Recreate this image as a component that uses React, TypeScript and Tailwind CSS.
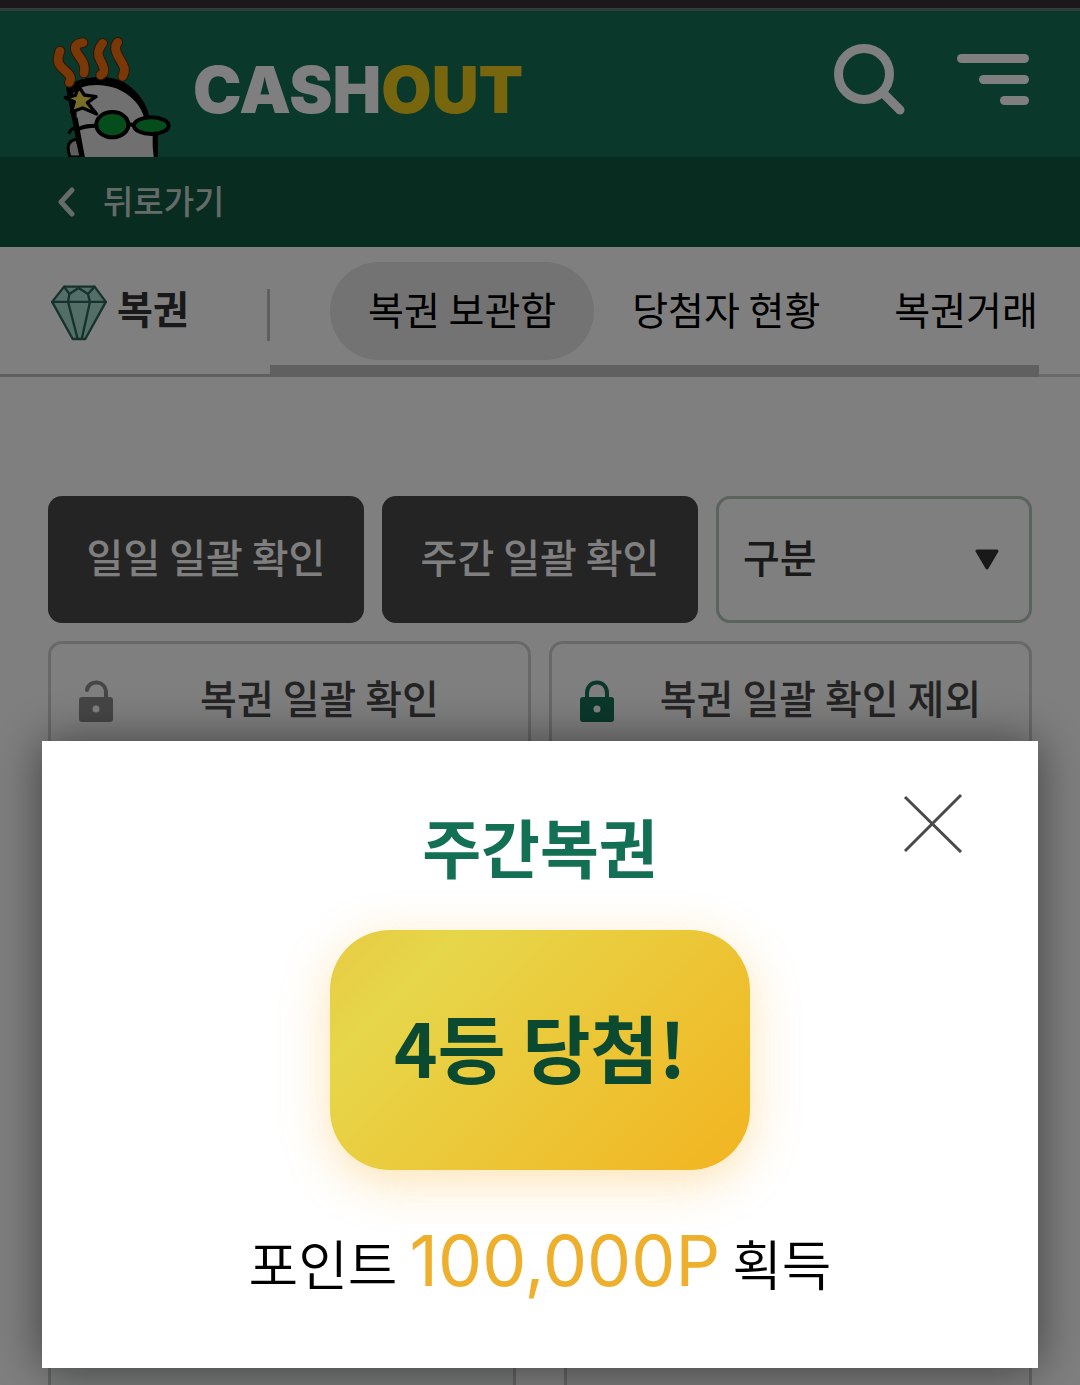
import React from "react";

const flames = [
  "M90 156C78 190 86 198 104 214C122 230 126 236 118 250",
  "M159 131C136 134 130 144 141 162C154 184 168 192 162 222",
  "M218 133C204 150 200 164 211 184C224 206 226 222 212 228",
  "M263 130C252 142 256 158 268 178C284 204 288 212 278 232",
];

function Mascot() {
  return (
    <svg viewBox="60 108 366 366" className="h-[122px] w-[122px] shrink-0" aria-hidden="true">
      <path d="M120 474C108 440 116 425 140 420L158 474Z" fill="#bcbcbc" stroke="#000" strokeWidth="9" />
      <path d="M116 404C120 394 126 388 136 386" fill="none" stroke="#000" strokeWidth="9" />
      <path
        d="M150 484L108 266C146 232 216 226 270 244C320 268 348 310 358 352L384 400L384 484Z"
        fill="#000"
      />
      <path
        d="M158 484L126 288C150 252 214 252 258 268C306 288 334 322 343 358L368 408V440L372 484Z"
        fill="#e0e0e0"
      />
      <path d="M112 270L138 290L140 356L124 352Z" fill="#000" />
      <path d="M136 356L160 484" stroke="#000" strokeWidth="13" />
      <g fill="none" strokeLinecap="round" strokeLinejoin="round">
        {flames.map((d) => (
          <g key={d}>
            <path d={d} stroke="#5c2c0c" strokeWidth="32" />
            <path d={d} stroke="#f2700f" strokeWidth="26" />
          </g>
        ))}
      </g>
      <path d="M142 392C160 380 180 380 200 380M292 376L312 378" fill="none" stroke="#000" strokeWidth="12" />
      <ellipse cx="247" cy="377" rx="48" ry="38" fill="#0b9c38" stroke="#000" strokeWidth="12" />
      <ellipse cx="364" cy="380" rx="52" ry="25" fill="#0b9c38" stroke="#000" strokeWidth="12" />
      <path
        d="M146 262L163 288L198 293L172 311L200 345L158 327L124 339L133 308L106 296L136 289Z"
        fill="#f2dc4a"
        stroke="#000"
        strokeWidth="10"
        strokeLinejoin="round"
      />
    </svg>
  );
}

function Gem() {
  return (
    <svg viewBox="150 400 174 172" className="mt-1 h-[57px] w-[58px] shrink-0" aria-hidden="true">
      <g stroke="#2c6458" strokeWidth="7" strokeLinejoin="round" strokeLinecap="round">
        <path d="M192 408H284L318 454L256 566H218L156 454Z" fill="#a4dccc" />
        <path
          d="M156 454H318M192 408L208 430L236 412L264 430L284 408M208 430L204 454L232 562M264 430L270 454L246 562"
          fill="none"
        />
      </g>
    </svg>
  );
}

function Lock({ open = false }: { open?: boolean }) {
  return (
    <svg
      viewBox="0 0 34 42"
      className={open ? "h-[42px] w-[34px] shrink-0 text-[#8c8c8c]" : "h-[42px] w-[34px] shrink-0 text-[#147054]"}
      aria-hidden="true"
    >
      <path
        d={open ? "M8 10C10 -1 27 0 27 13V18" : "M7 18V13C7 -1 27 -1 27 13V18"}
        fill="none"
        stroke="currentColor"
        strokeWidth="4"
        strokeLinecap="round"
      />
      <rect y="17" width="34" height="25" rx="3" fill="currentColor" />
      <circle cx="17" cy="29" r="3.5" fill="#fff" />
    </svg>
  );
}

const tabs = ["복권 보관함", "당첨자 현황", "복권거래"];

export default function App() {
  return (
    <div className="flex min-h-screen flex-col overflow-hidden bg-white font-['Noto_Sans_CJK_KR',sans-serif] text-[40px] leading-[56px] text-[#333]">
      <div className="h-2 bg-[#343036]" />
      <header className="flex h-[149px] items-end border-t-[3px] border-[#5c7a78] bg-[#147054] pr-[51px] pl-[50px]">
        <Mascot />
        <a
          href="#home"
          className="ml-[21px] self-center pt-3 font-['Inter',sans-serif] text-[65px] leading-[64px] font-black text-white"
        >
          CASH<span className="text-[#f0cd1c]">OUT</span>
        </a>
        <div className="mb-[41px] ml-auto flex items-start gap-[52px]">
          <button type="button" aria-label="검색">
            <svg viewBox="0 0 72 72" className="h-[72px] w-[72px]" fill="none" stroke="#fff" strokeWidth="9" aria-hidden="true">
              <circle cx="31" cy="30" r="25.5" />
              <path d="M50 49L67 66" strokeLinecap="round" />
            </svg>
          </button>
          <button type="button" aria-label="메뉴" className="flex w-[72px] flex-col items-end gap-3 pt-[10px]">
            <span className="h-[9px] w-[72px] rounded-full bg-white" />
            <span className="h-[9px] w-[50px] rounded-full bg-white" />
            <span className="h-[9px] w-[29px] rounded-full bg-white" />
          </button>
        </div>
      </header>

      <a href="#back" className="flex h-[90px] items-center bg-[#125841] pl-[57px] text-[33px] font-medium text-[#c8d6d0]">
        <svg viewBox="0 0 18 30" className="mr-7 h-[30px] w-[18px]" fill="none" stroke="#c8d6d0" strokeWidth="5" aria-hidden="true">
          <path d="M15 3L4 15L15 27" strokeLinecap="round" strokeLinejoin="round" />
        </svg>
        <span className="pb-1">뒤로가기</span>
      </a>

      <nav className="flex h-[130px] border-b-[3px] border-[#d4d4d4] pr-[41px] text-[39px]">
        <div className="-mb-[3px] flex w-[270px] shrink-0 items-center border-b-[3px] border-[#bfbfbf] pl-[50px] font-bold">
          <Gem />
          <span className="ml-[9px] pb-2">복권</span>
          <span className="mt-2 ml-auto h-[52px] w-[3px] bg-[#bfbfbf]" />
        </div>
        <div className="-mb-[3px] flex min-w-0 grow items-start overflow-hidden border-b-[12px] border-[#c0c0c0] pt-[15px] pl-[60px] whitespace-nowrap text-black">
          {tabs.map((tab, i) => (
            <a
              key={tab}
              href="#tab"
              className={
                i === 0
                  ? "shrink-0 rounded-full bg-[#e6e6e6] px-[38px] pt-[18px] pb-6"
                  : i === tabs.length - 1
                    ? "shrink-0 pt-[18px] pb-6 pl-9"
                    : "shrink-0 px-[38px] pt-[18px] pb-6"
              }
            >
              {tab}
            </a>
          ))}
        </div>
      </nav>

      <main className="flex grow flex-col px-12 pt-[119px] font-medium">
        <div className="grid grid-cols-3 gap-[18px]">
          <button type="button" className="h-[127px] rounded-[14px] bg-[#484848] pb-2 text-white">
            일일 일괄 확인
          </button>
          <button type="button" className="h-[127px] rounded-[14px] bg-[#484848] pb-2 text-white">
            주간 일괄 확인
          </button>
          <div className="relative">
            <select
              aria-label="구분"
              className="h-[127px] w-full appearance-none rounded-[14px] border-[3px] border-[#b4c6b8] bg-white pb-2 pl-6"
            >
              <option>구분</option>
            </select>
            <svg viewBox="0 0 24 21" className="pointer-events-none absolute top-[53px] right-[33px] h-[21px] w-6" aria-hidden="true">
              <path d="M2 2H22L12 19Z" fill="#333" stroke="#333" strokeWidth="3" strokeLinejoin="round" />
            </svg>
          </div>
        </div>
        <div className="mt-[18px] grid grid-cols-2 gap-[18px] text-[#484848]">
          <button type="button" className="flex h-[127px] items-center rounded-[14px] border-[3px] border-[#d0d0d0] px-7 pb-2">
            <Lock open />
            <span className="grow pb-2 pl-[26px] text-center">복권 일괄 확인</span>
          </button>
          <button type="button" className="flex h-[127px] items-center rounded-[14px] border-[3px] border-[#d0d0d0] px-7 pb-2">
            <Lock />
            <span className="grow pb-2 pl-[26px] text-center">복권 일괄 확인 제외</span>
          </button>
        </div>
        <div className="mt-12 grid grow grid-cols-2 gap-12">
          <div className="rounded-t-[14px] border-x-[3px] border-t-[3px] border-[#c4c8c6] bg-[#eef6f3]" />
          <div className="rounded-t-[14px] border-x-[3px] border-t-[3px] border-[#c8c8c8] bg-[#f8f6f6]" />
        </div>
      </main>

      <div className="fixed inset-0 flex items-end bg-black/50 px-[42px] pb-[17px]">
        <section
          role="dialog"
          aria-labelledby="prize-title"
          className="relative flex w-full flex-col items-center bg-white pt-[57px] pb-14 shadow-[0_0_45px_rgba(0,0,0,0.5)]"
        >
          <button type="button" aria-label="닫기" className="absolute top-[52px] right-[75px]">
            <svg viewBox="0 0 60 60" className="h-[60px] w-[60px]" fill="none" stroke="#4a4a4a" strokeWidth="3" aria-hidden="true">
              <path d="M2 4L58 59M58 2L2 58" />
            </svg>
          </button>
          <h2 id="prize-title" className="text-[64px] leading-[94px] font-bold text-[#147054]">
            주간복권
          </h2>
          <p className="mt-[38px] flex h-60 w-[420px] items-center justify-center rounded-[60px] bg-[linear-gradient(135deg,#e8cb42_0%,#e6d64a_20%,#f2b420_100%)] pb-2 text-[74px] leading-[104px] font-bold text-[#0b4a31] shadow-[0_12px_48px_rgba(250,175,40,0.35)]">
            4등 당첨!
          </p>
          <p className="mt-[42px] text-[54px] leading-[98px] font-[350] whitespace-nowrap text-black">
            포인트 <span className="font-['Inter',sans-serif] text-[70px] font-normal text-[#eeb02c]">100,000P</span> 획득
          </p>
        </section>
      </div>
    </div>
  );
}
